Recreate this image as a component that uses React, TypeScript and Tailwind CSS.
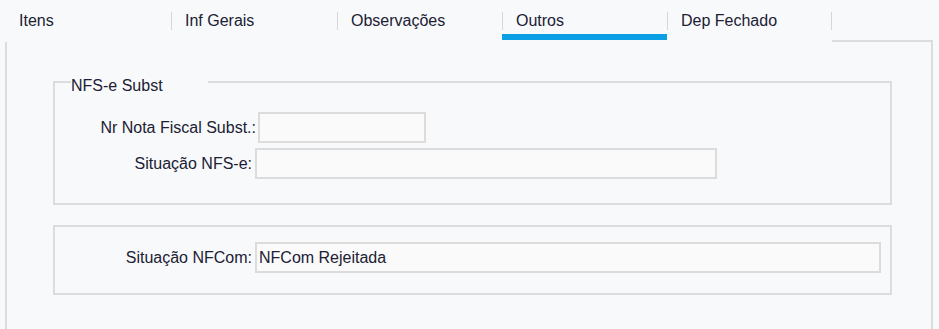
const tabs = [
  { label: "Itens", w: "w-[165px]", first: true },
  { label: "Inf Gerais", w: "w-[166px]" },
  { label: "Observações", w: "w-[165px]" },
  { label: "Outros", w: "w-[165px]", active: true },
  { label: "Dep Fechado", w: "w-[165px]", last: true },
];

function Field({ className = "", value = "" }: { className?: string; value?: string }) {
  return (
    <div
      className={`h-[31px] border-2 border-[#dcdcdc] bg-[#fafafa] pl-[2px] flex items-center leading-[18px] ${className}`}
    >
      {value}
    </div>
  );
}

export default function App() {
  return (
    <div
      className="w-[939px] h-[329px] overflow-hidden bg-[#f8f9fa] pl-[5px] text-[16px] text-[#202034]"
      style={{ fontFamily: '"Liberation Sans", Arial, sans-serif' }}
    >
      <div className="w-[928px] flex flex-col">
        {/* tab strip */}
        <div className="flex h-[42px]">
          <div className="w-[1px]" />
          {tabs.map((t) => (
            <div key={t.label} className={`${t.w} flex flex-col`}>
              <div
                className={`mt-[12px] h-[18px] leading-[18px] pl-[13px] border-[#d6d6d6] ${
                  t.first ? "" : "border-l"
                } ${t.last ? "border-r" : ""}`}
              >
                {t.label}
              </div>
              {t.active ? <div className="mt-[4px] h-[6px] bg-[#0ba0e3]" /> : null}
            </div>
          ))}
          <div className="flex-1 flex flex-col justify-end">
            <div className="h-[2px] bg-[#dcdcdc]" />
          </div>
        </div>

        {/* tab page */}
        <div className="h-[287px] border-l-2 border-r-2 border-[#dcdcdc] pl-[46px] pt-[39px]">
          <div className="relative w-[839px] h-[124px] border-2 border-[#dddddd] pt-[29px]">
            <div className="absolute top-[-6px] left-[16px] w-[137px] leading-[18px] bg-[#f8f9fa]">
              NFS-e Subst
            </div>
            <div className="flex items-center">
              <div className="w-[201px] text-right leading-[18px]">Nr Nota Fiscal Subst.:</div>
              <Field className="ml-[2px] w-[168px]" />
            </div>
            <div className="flex items-center mt-[5px]">
              <div className="w-[197px] text-right leading-[18px]">Situação NFS-e:</div>
              <Field className="ml-[3px] w-[462px]" />
            </div>
          </div>

          <div className="mt-[20px] w-[839px] h-[70px] border-2 border-[#dddddd] pt-[15px]">
            <div className="flex items-center">
              <div className="w-[197px] text-right leading-[18px]">Situação NFCom:</div>
              <Field className="ml-[3px] w-[626px]" value="NFCom Rejeitada" />
            </div>
          </div>
        </div>
      </div>
    </div>
  );
}
